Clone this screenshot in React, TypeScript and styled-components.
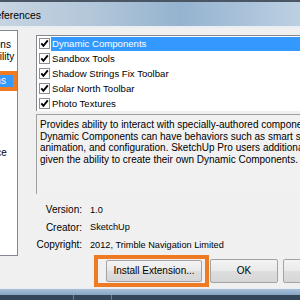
import React from 'react';
import styled, { createGlobalStyle } from 'styled-components';

const GlobalStyle = createGlobalStyle`
  html, body {
    margin: 0;
    padding: 0;
  }
  body {
    width: 300px;
    height: 300px;
    overflow: hidden;
    background: #f0f0f0;
    font-family: "Liberation Sans", Arial, sans-serif;
    color: #000;
  }
`;

const s = {
  Window: styled.div`
    width: 300px;
    height: 300px;
    display: flex;
    flex-direction: column;
    overflow: hidden;
  `,
  TitleBar: styled.div`
    flex: none;
    height: 24px;
    border-top: 2px solid #4b5664;
    border-bottom: 2px solid #e9eef3;
    background: linear-gradient(90deg, #c7d4e1 0%, #b3c7da 30%, #95b3cf 60%, #a8c1d9 80%, #bdd0e2 100%);
    display: flex;
    align-items: center;
    overflow: hidden;
  `,
  Title: styled.span`
    margin-left: -15px;
    padding-top: 2px;
    font-size: 10.4px;
    white-space: nowrap;
  `,
  Body: styled.div`
    flex: 1;
    display: flex;
    align-items: flex-start;
    background: #f0f0f0;
  `,
  CategoryList: styled.ul`
    flex: none;
    list-style: none;
    margin: 2px 0 0 -45px;
    padding: 8px 0 0 0;
    width: 62px;
    height: 216px;
    background: #fff;
    border: 1px solid #828790;
    border-left: none;
    font-size: 10px;
  `,
  Category: styled.li<{ $selected?: boolean }>`
    height: 12px;
    line-height: 12px;
    padding-left: 2px;
    margin-right: ${(p) => (p.$selected ? '4px' : '0')};
    white-space: nowrap;
    background: ${(p) => (p.$selected ? '#3399ff' : 'transparent')};
    color: ${(p) => (p.$selected ? '#fff' : '#000')};
    outline: ${(p) => (p.$selected ? '4px solid #f07a22' : 'none')};
  `,
  Main: styled.div`
    flex: none;
    width: 320px;
    margin-left: 18px;
    padding-top: 7px;
    display: flex;
    flex-direction: column;
  `,
  ExtList: styled.div`
    height: 75px;
    background: #fff;
    border-top: 1px solid #828790;
    border-left: 1px solid #828790;
    padding-left: 1px;
    font-size: 9.6px;
  `,
  ExtRow: styled.div`
    height: 15px;
    display: flex;
    align-items: center;
  `,
  CheckBox: styled.span`
    flex: none;
    width: 9px;
    height: 9px;
    margin: 0 1px 0 1px;
    border: 1px solid #8f8f8f;
    background: #fff;
    display: flex;
    align-items: center;
    justify-content: center;
  `,
  ExtLabel: styled.span<{ $selected?: boolean }>`
    flex: 1;
    height: 14px;
    line-height: 14px;
    padding-left: 1px;
    white-space: nowrap;
    background: ${(p) => (p.$selected ? '#3399ff' : 'transparent')};
    color: ${(p) => (p.$selected ? '#fff' : '#000')};
  `,
  Description: styled.div`
    margin-top: 3px;
    height: 73px;
    padding: 4px 0 2px 3px;
    background: #f1f1f1;
    border-top: 1px solid #a0a0a0;
    border-left: 1px solid #a0a0a0;
    font-size: 10px;
    line-height: 11.7px;
  `,
  DescLine: styled.div`
    white-space: nowrap;
  `,
  Info: styled.div`
    margin-top: 7px;
    display: grid;
    grid-template-columns: 46px auto;
    grid-auto-rows: 17.5px;
    column-gap: 8px;
    align-items: center;
    font-size: 10px;
  `,
  InfoLabel: styled.span`
    text-align: right;
    white-space: nowrap;
  `,
  InfoValue: styled.span`
    white-space: nowrap;
    font-size: 9.2px;
  `,
  ButtonRow: styled.div`
    margin-top: 1px;
    padding-left: 58px;
    display: flex;
    align-items: center;
  `,
  Highlight: styled.div`
    border: 4px solid #f07a22;
    padding: 1px 3px 1px 8px;
    display: flex;
  `,
  Button: styled.button<{ $w: number; $h: number }>`
    flex: none;
    width: ${(p) => p.$w}px;
    height: ${(p) => p.$h}px;
    margin: 0;
    padding: 0;
    border: 1px solid #a3a3a3;
    border-radius: 2px;
    background: linear-gradient(#f4f4f4, #e9e9e9 50%, #dedede 51%, #d6d6d6);
    font-family: "Liberation Sans", Arial, sans-serif;
    font-size: 10px;
    color: #000;
  `,
  SideButton: styled.span<{ $gap: number }>`
    display: flex;
    margin-left: ${(p) => p.$gap}px;
  `,
  Frame: styled.div`
    flex: none;
    height: 6px;
    border-top: 1px solid #e8eef5;
    background: linear-gradient(#a9c0d8, #86a5c4);
  `,
  Taskbar: styled.div`
    flex: none;
    height: 5px;
    background: #34465a;
    display: flex;
  `,
  TaskSep: styled.span<{ $w: number }>`
    width: ${(p) => p.$w}px;
    border-right: 1px solid #6c7f94;
  `,
};

const Check = () => (
  <svg width="9" height="9" viewBox="0 0 9 9">
    <path d="M1.3 4.4 L3.4 6.8 L7.8 1.4" fill="none" stroke="#000" strokeWidth="1.9" />
  </svg>
);

const categories = [
  'Applications',
  'Compatibility',
  'Drawing',
  'Extensions',
  'Files',
  'General',
  'OpenGL',
  'Shortcuts',
  'Template',
  'Workspace',
];

const extensions = [
  'Dynamic Components',
  'Sandbox Tools',
  'Shadow Strings Fix Toolbar',
  'Solar North Toolbar',
  'Photo Textures',
];

const description = [
  'Provides ability to interact with specially-authored components.',
  'Dynamic Components can have behaviors such as smart scaling,',
  'animation, and configuration. SketchUp Pro users additionally are',
  'given the ability to create their own Dynamic Components.',
];

const info = [
  ['Version:', '1.0'],
  ['Creator:', 'SketchUp'],
  ['Copyright:', '2012, Trimble Navigation Limited'],
];

export default function App() {
  return (
    <>
      <GlobalStyle />
      <s.Window>
        <s.TitleBar>
          <s.Title>Preferences</s.Title>
        </s.TitleBar>
        <s.Body>
          <s.CategoryList>
            {categories.map((c) => (
              <s.Category key={c} $selected={c === 'Extensions'}>
                {c}
              </s.Category>
            ))}
          </s.CategoryList>
          <s.Main>
            <s.ExtList>
              {extensions.map((e, i) => (
                <s.ExtRow key={e}>
                  <s.CheckBox>
                    <Check />
                  </s.CheckBox>
                  <s.ExtLabel $selected={i === 0}>{e}</s.ExtLabel>
                </s.ExtRow>
              ))}
            </s.ExtList>
            <s.Description>
              {description.map((l) => (
                <s.DescLine key={l}>{l}</s.DescLine>
              ))}
            </s.Description>
            <s.Info>
              {info.map(([k, v]) => (
                <React.Fragment key={k}>
                  <s.InfoLabel>{k}</s.InfoLabel>
                  <s.InfoValue>{v}</s.InfoValue>
                </React.Fragment>
              ))}
            </s.Info>
            <s.ButtonRow>
              <s.Highlight>
                <s.Button $w={96} $h={22}>Install Extension...</s.Button>
              </s.Highlight>
              <s.SideButton $gap={1}>
                <s.Button $w={68} $h={24}>OK</s.Button>
              </s.SideButton>
              <s.SideButton $gap={5}>
                <s.Button $w={68} $h={24}>Cancel</s.Button>
              </s.SideButton>
            </s.ButtonRow>
          </s.Main>
        </s.Body>
        <s.Frame />
        <s.Taskbar>
          <s.TaskSep $w={73} />
          <s.TaskSep $w={37} />
        </s.Taskbar>
      </s.Window>
    </>
  );
}
